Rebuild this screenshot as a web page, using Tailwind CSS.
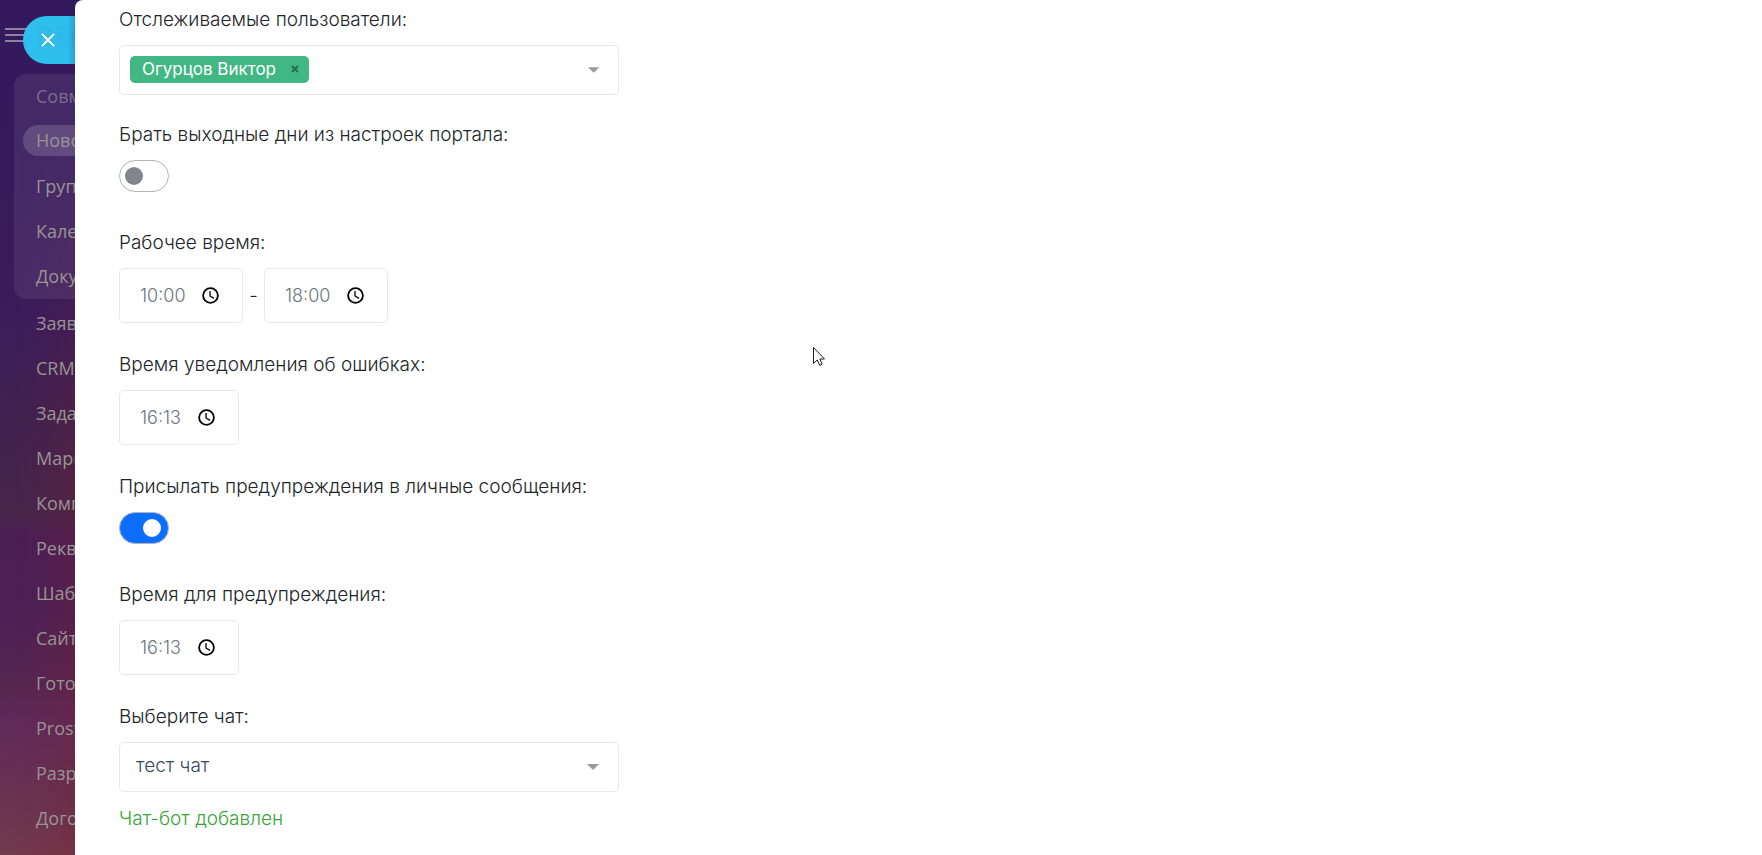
<!DOCTYPE html>
<html lang="ru">

<head>
    <meta charset="UTF-8">
    <meta name="viewport" content="width=device-width, initial-scale=1.0">
    <script src="https://cdn.jsdelivr.net/npm/@tailwindcss/browser@4"></script>
    <title>Настройки чат-бота</title>
</head>

<body class="relative flex h-screen overflow-hidden bg-[#33185c] font-['Inter','Open_Sans',sans-serif] text-[#212529]">
    <!-- Меню портала -->
    <aside class="relative w-[75px] shrink-0 overflow-hidden font-['Open_Sans','Noto_Sans',sans-serif] text-lg text-[#999494]">
        <div class="absolute inset-0 bg-[linear-gradient(176deg,#33185c_0%,#371a5b_22%,#3c1d5a_38%,#42224e_50%,#47254a_60%,#4b1e56_63%,#4e2055_72%,#562650_80%,#602a5a_84%,#693252_92%,#743a4c_100%)]"></div>
        <div class="absolute inset-0 bg-[linear-gradient(90deg,transparent_20%,#7020401f_60%,#70203050_100%)] [mask-image:linear-gradient(180deg,transparent_15%,#000_60%)]"></div>
        <header class="relative h-[74px]">
            <button class="absolute left-[5px] top-7 flex w-6 flex-col gap-1" aria-label="Меню">
                <span class="h-[2px] bg-[#8b819c]"></span>
                <span class="h-[2px] bg-[#8b819c]"></span>
                <span class="h-[2px] bg-[#8b819c]"></span>
            </button>
        </header>
        <nav class="relative w-60 leading-[45px]">
            <div class="mb-[2px] ml-[14px] rounded-l-xl bg-white/7 pl-[9px]">
                <a href="#" class="block pl-[13px] text-[#7c6e88]">Совместная работа</a>
                <a href="#" class="mb-2 mt-[6px] block rounded-l-full bg-white/16 pl-[13px] leading-[31px]">Новости</a>
                <a href="#" class="block pl-[13px]">Группы</a>
                <a href="#" class="block pl-[13px]">Календарь</a>
                <a href="#" class="block pl-[13px]">Документы</a>
            </div>
            <a href="#" class="block pl-9">Заявки</a>
            <a href="#" class="block pl-9">CRM</a>
            <a href="#" class="block pl-9">Задачи</a>
            <a href="#" class="block pl-9">Маркетинг</a>
            <a href="#" class="block pl-9">Компания</a>
            <a href="#" class="block pl-9">Реквизиты</a>
            <a href="#" class="block pl-9">Шаблоны</a>
            <a href="#" class="block pl-9">Сайты</a>
            <a href="#" class="block pl-9">Готовые</a>
            <a href="#" class="block pl-9">Prosto</a>
            <a href="#" class="block pl-9">Разработка</a>
            <a href="#" class="block pl-9">Договоры</a>
        </nav>
        <!-- Закрыть слайдер -->
        <button class="absolute left-[23px] top-4 h-12 w-[52px] overflow-hidden rounded-l-full bg-[#2fbfef]" aria-label="Закрыть">
            <span class="absolute left-3 top-0 text-[28px] font-bold leading-10 text-[#2db9ea]">BEG</span>
            <span class="absolute inset-y-0 right-0 w-2 bg-linear-to-r from-transparent to-black/15"></span>
            <svg class="absolute left-[18px] top-[17px] size-[14px]" viewBox="0 0 14 14" fill="none" stroke="#fff" stroke-width="1.800">
                <path d="M1 1l12 12M13 1L1 13" />
            </svg>
        </button>
    </aside>

    <main class="min-w-0 grow rounded-tl-lg bg-white pl-11 pt-[5px] text-[19px] font-light leading-[30px]">
        <form>
            <div class="mb-[25px]">
                <label for="users" class="block">Отслеживаемые пользователи:</label>
                <div class="mt-[10px] flex h-[50px] w-full max-w-[500px] items-center rounded-[5px] border border-[#e8e8e8] pl-[10px] pr-[19px]">
                    <span class="mb-[2px] flex h-[27px] shrink-0 items-center whitespace-nowrap rounded-[5px] bg-[#41b883] pl-3 pr-[10px] text-[17px] font-normal text-white">
                        Огурцов Виктор
                        <button type="button" class="ml-[15px]" aria-label="Удалить">
                            <svg class="size-2" viewBox="0 0 8 8" stroke="#266d4d" stroke-width="2"><path d="M1 1l6 6M7 1L1 7" /></svg>
                        </button>
                    </span>
                    <input id="users" type="text" class="min-w-0 grow outline-none">
                    <svg class="h-[6px] w-3" viewBox="0 0 12 6" fill="#999"><path d="M0 0h12L6 6z" /></svg>
                </div>
            </div>

            <div class="mb-9">
                <label for="weekend" class="block">Брать выходные дни из настроек портала:</label>
                <input id="weekend" type="checkbox" class="mt-[10px] flex h-8 w-[50px] appearance-none items-center rounded-full border border-[#adb5bd] px-[5px] before:size-[18px] before:rounded-full before:bg-[#82868c] checked:justify-end checked:bg-[#0d6efd] checked:px-[7px] checked:before:bg-white">
            </div>

            <div class="mb-[27px]">
                <label for="work-from" class="block">Рабочее время:</label>
                <div class="mt-[10px] flex items-center">
                    <div class="flex h-[55px] w-[124px] items-center rounded-[5px] border border-[#e8e8e8] pl-5">
                        <input id="work-from" type="text" value="10:00" class="w-[62px] text-lg text-[#6c757d] outline-none">
                        <button type="button" aria-label="Выбрать время">
                            <svg class="size-[17px]" viewBox="0 0 17 17" fill="none" stroke="#000" stroke-width="1.800"><circle cx="8.5" cy="8.5" r="7.4" /><path d="M8 4v5l4 2.4" stroke-width="1.3" /></svg>
                        </button>
                    </div>
                    <span class="w-[21px] text-center">-</span>
                    <div class="flex h-[55px] w-[124px] items-center rounded-[5px] border border-[#e8e8e8] pl-5">
                        <input id="work-to" type="text" value="18:00" aria-label="Конец рабочего времени" class="w-[62px] text-lg text-[#6c757d] outline-none">
                        <button type="button" aria-label="Выбрать время">
                            <svg class="size-[17px]" viewBox="0 0 17 17" fill="none" stroke="#000" stroke-width="1.800"><circle cx="8.5" cy="8.5" r="7.4" /><path d="M8 4v5l4 2.4" stroke-width="1.3" /></svg>
                        </button>
                    </div>
                </div>
            </div>

            <div class="mb-[27px]">
                <label for="error-time" class="block">Время уведомления об ошибках:</label>
                <div class="mt-[10px] flex h-[55px] w-[120px] items-center rounded-[5px] border border-[#e8e8e8] pl-5">
                    <input id="error-time" type="text" value="16:13" class="w-[58px] text-lg text-[#6c757d] outline-none">
                    <button type="button" aria-label="Выбрать время">
                        <svg class="size-[17px]" viewBox="0 0 17 17" fill="none" stroke="#000" stroke-width="1.800"><circle cx="8.5" cy="8.5" r="7.4" /><path d="M8 4v5l4 2.4" stroke-width="1.3" /></svg>
                    </button>
                </div>
            </div>

            <div class="mb-9">
                <label for="warn" class="block">Присылать предупреждения в личные сообщения:</label>
                <input id="warn" type="checkbox" checked class="mt-[10px] flex h-8 w-[50px] appearance-none items-center rounded-full border border-[#adb5bd] px-[5px] before:size-[18px] before:rounded-full before:bg-[#82868c] checked:justify-end checked:bg-[#0d6efd] checked:px-[7px] checked:before:bg-white">
            </div>

            <div class="mb-[27px]">
                <label for="warn-time" class="block">Время для предупреждения:</label>
                <div class="mt-[10px] flex h-[55px] w-[120px] items-center rounded-[5px] border border-[#e8e8e8] pl-5">
                    <input id="warn-time" type="text" value="16:13" class="w-[58px] text-lg text-[#6c757d] outline-none">
                    <button type="button" aria-label="Выбрать время">
                        <svg class="size-[17px]" viewBox="0 0 17 17" fill="none" stroke="#000" stroke-width="1.800"><circle cx="8.5" cy="8.5" r="7.4" /><path d="M8 4v5l4 2.4" stroke-width="1.3" /></svg>
                    </button>
                </div>
            </div>

            <label for="chat" class="block">Выберите чат:</label>
            <div class="relative mt-[10px] w-full max-w-[500px]">
                <select id="chat" class="block h-[50px] w-full appearance-none rounded-[5px] border border-[#e8e8e8] px-4 pb-[2px] text-[#35495e]">
                    <option>тест чат</option>
                </select>
                <svg class="pointer-events-none absolute right-5 top-[22px] h-[6px] w-3" viewBox="0 0 12 6" fill="#999"><path d="M0 0h12L6 6z" /></svg>
            </div>
            <p class="mt-3 text-[#35a535]">Чат-бот добавлен</p>
        </form>
    </main>

    <svg class="pointer-events-none absolute left-[813px] top-[347px] h-5 w-3" viewBox="0 0 12 20" fill="#fff" stroke="#1a1a2a" stroke-linejoin="round">
        <path d="M.5.5v16l3.7-3.5 2.6 5.4 2.4-1.2L6.8 12h4.7z" />
    </svg>
</body>

</html>
